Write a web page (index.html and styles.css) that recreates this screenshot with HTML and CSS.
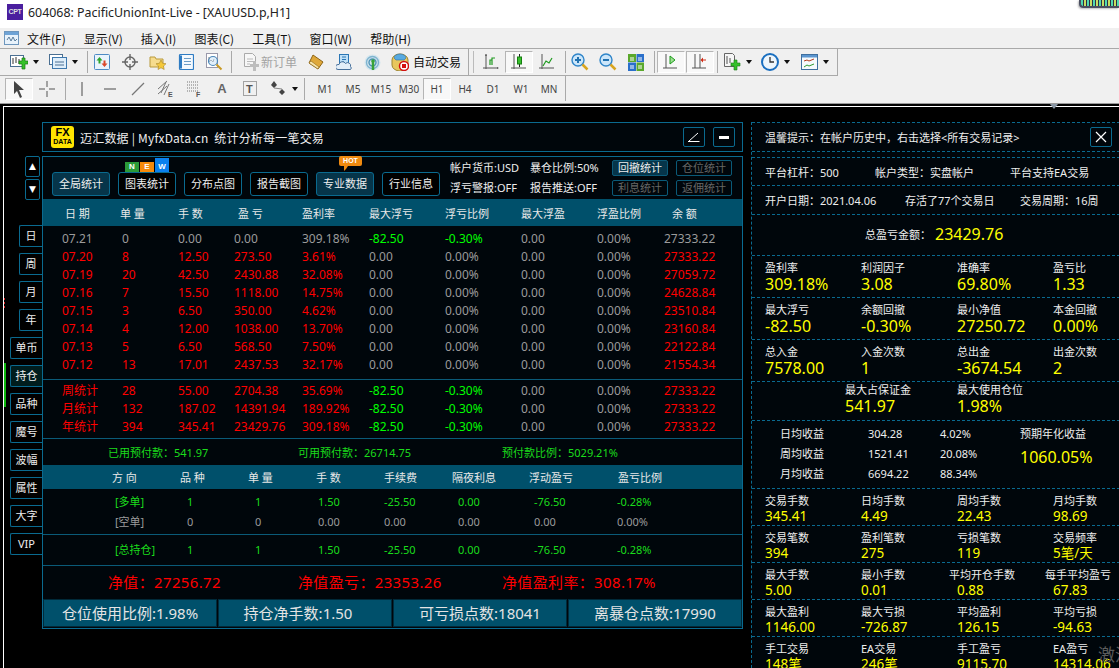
FILE: index.html
```html
<!DOCTYPE html>
<html lang="zh">
<head>
<meta charset="utf-8">
<title>604068: PacificUnionInt-Live - [XAUUSD.p,H1]</title>
<link rel="stylesheet" href="styles.css">
</head>
<body>
<div class="app">
  <header class="titlebar">
    <span class="appicon">CPT</span>
    <span class="apptitle">604068: PacificUnionInt-Live - [XAUUSD.p,H1]</span>
    <span class="peek"></span>
  </header>
  <nav class="menubar">
    <svg class="menuicon" width="15" height="14" viewBox="0 0 15 14"><rect x=".5" y=".5" width="14" height="13" fill="#e8f2fb" stroke="#6d96bd"/><rect x="1" y="1" width="13" height="3" fill="#6ea3d6"/><path d="M3 9l2-3 2 4 2-4 2 4 2-2" fill="none" stroke="#5a7d9c"/></svg>
    <span class="menu m1">文件(F)</span><span class="menu">显示(V)</span><span class="menu">插入(I)</span><span class="menu">图表(C)</span><span class="menu">工具(T)</span><span class="menu">窗口(W)</span><span class="menu">帮助(H)</span>
  </nav>

  <div class="tbrow row1">
    <div class="tbgroup g1">
      <span class="ti"><svg width="18" height="16" viewBox="0 0 18 16"><rect x=".5" y="1.5" width="13" height="11" fill="#fff" stroke="#4a6f92"/><path d="M3 4v6M6 3v6M9 5v5" stroke="#333"/><path d="M9 7h3v-3h3v3h3v3h-3v5h-3v-5H9z" fill="#35c02a" stroke="#1a7a14" stroke-width=".7"/></svg></span><span class="car"></span>
      <span class="ti gl3"><svg width="18" height="16" viewBox="0 0 18 16"><rect x=".5" y=".5" width="13" height="10" fill="#fff" stroke="#4a6f92"/><rect x="3.5" y="3.5" width="14" height="11" fill="#dfeefa" stroke="#3f78ad"/><path d="M6 8h9M6 11h9" stroke="#4a6f92"/></svg></span><span class="car"></span>
      <span class="sep sl7"></span>
      <span class="ti"><svg width="16" height="16" viewBox="0 0 16 16"><rect x=".5" y=".5" width="15" height="15" rx="1" fill="#e9f3fc" stroke="#4d8ac4"/><path d="M5.5 3l3 3.5h-2v3h-2v-3h-2z" fill="#2ca52c"/><path d="M10.5 13l-3-3.5h2v-3h2v3h2z" fill="#d9482b"/></svg></span>
      <span class="ti"><svg width="16" height="16" viewBox="0 0 16 16"><circle cx="8" cy="8" r="5" fill="none" stroke="#666" stroke-width="1.4"/><path d="M8 0v6M8 10v6M0 8h6M10 8h6" stroke="#666" stroke-width="1.4"/></svg></span>
      <span class="ti"><svg width="18" height="17" viewBox="0 0 18 17"><path d="M1 3h5l1 2h7v8H1z" fill="#f6dc8e" stroke="#b99a3c"/><path d="M12 6l1.6 3.3 3.4.4-2.5 2.4.7 3.4-3.2-1.7-3 1.7.6-3.4L7 9.7l3.4-.4z" fill="#f5c93b" stroke="#a4832a" stroke-width=".6"/></svg></span>
      <span class="ti"><svg width="16" height="16" viewBox="0 0 16 16"><rect x="1.5" y=".5" width="14" height="15" rx="1" fill="#f4f9fe" stroke="#2f7cc3" stroke-width="1.2"/><path d="M1 1.5h3v13H1z" fill="#2f7cc3"/><path d="M6 4.500h7M6 7.500h7M6 10.500h7" stroke="#6b9cc7"/></svg></span>
      <span class="ti"><svg width="18" height="18" viewBox="0 0 18 18"><rect x="1.500" y=".5" width="11" height="14" fill="#fff" stroke="#99a"/><path d="M4 4v5l2-2 2 2 1-3" fill="none" stroke="#777"/><circle cx="8" cy="8" r="4.500" fill="#cde4f7" fill-opacity=".6" stroke="#4a87b8" stroke-width="1.200"/><path d="M11.500 11.500l5 5" stroke="#c99a25" stroke-width="2"/></svg></span>
      <span class="sep sl3"></span>
      <span class="order"><svg width="16" height="18" viewBox="0 0 16 18"><path d="M1.500.5h8l3 3v10h-11z" fill="#f7f7f7" stroke="#aaa"/><path d="M4 6h6M4 8.500h6M4 11h3" stroke="#bbb"/><path d="M7 11h3V8h3v3h3v3h-3v4h-3v-4H7z" fill="#bdbdbd"/></svg><span class="ordertxt">新订单</span></span>
      <span class="ti"><svg width="16" height="16" viewBox="0 0 16 16"><path d="M5 1l10 7-5 7L1 9z" fill="#dfa83a" stroke="#8d6415"/><path d="M1 9l9 6 1-2-8-6z" fill="#f7e5ab" stroke="#8d6415" stroke-width=".6"/></svg></span>
      <span class="ti"><svg width="17" height="17" viewBox="0 0 17 17"><rect x="3.500" y=".5" width="9" height="11" fill="#bfe0f7" stroke="#2a76b5"/><path d="M6 3h4M6 5.500h4M6 8h2" stroke="#2a76b5"/><path d="M2 15.500a2.500 2.500 0 0 1 0-5h1a3.500 3.500 0 0 1 6.500-1 3 3 0 0 1 5 3 2 2 0 0 1 0 3z" fill="#e3eef8" stroke="#47709b"/></svg></span>
      <span class="ti"><svg width="17" height="17" viewBox="0 0 17 17"><circle cx="8.500" cy="8.500" r="8" fill="#d5e6ee"/><circle cx="8.500" cy="8.500" r="6" fill="none" stroke="#7fb4d0" stroke-width="1.400"/><circle cx="8.500" cy="8.500" r="3.500" fill="none" stroke="#4d93b8" stroke-width="1.400"/><path d="M9 7v9" stroke="#37a337" stroke-width="2.500"/><circle cx="9" cy="7" r="1.800" fill="#37a337"/></svg></span>
      <span class="auto"><svg width="18" height="18" viewBox="0 0 18 18"><path d="M1 7a8 6 0 0 1 16 0v5a8 6 0 0 1-16 0z" fill="#e8c65d" stroke="#9c8431"/><path d="M3 5a6 4 0 0 1 12 0l-2 2H5z" fill="#58aae0" stroke="#31709f" stroke-width=".6"/><circle cx="13" cy="13" r="4.500" fill="#fff" stroke="#d31010" stroke-width="1.500"/><rect x="11" y="11" width="4" height="4" fill="#d31010"/></svg><span class="autotxt">自动交易</span></span>
    </div>
    <div class="tbgroup g2">
      <span class="grip"></span>
      <span class="ti"><svg width="16" height="18" viewBox="0 0 16 18"><path d="M3 1v15M0 15h15" stroke="#555" fill="none"/><path d="M2 3l1-2 1 2M14 14l2 1-2 1" fill="#555"/><path d="M7 12V7h2M9 12V5h3" fill="none" stroke="#1f9a1f" stroke-width="1.200"/></svg></span>
      <span class="ti on"><svg width="16" height="18" viewBox="0 0 16 18"><path d="M3 1v15M0 15h15" stroke="#555" fill="none"/><path d="M8.500 1v13" stroke="#222"/><rect x="6.500" y="4" width="4" height="7" fill="#37c02c" stroke="#167d10"/></svg></span>
      <span class="ti"><svg width="16" height="18" viewBox="0 0 16 18"><path d="M3 1v15M0 15h15" stroke="#555" fill="none"/><path d="M4 12l3-5 3 2 3-5" transform="translate(0 1)" fill="none" stroke="#1f9a1f" stroke-width="1.200"/></svg></span>
      <span class="sep sl4"></span>
      <span class="ti"><svg width="18" height="18" viewBox="0 0 18 18"><circle cx="7" cy="7" r="6" fill="#cce6fa" stroke="#2f85c9" stroke-width="1.400"/><path d="M4 7h6M7 4v6" stroke="#2272b0" stroke-width="2"/><path d="M11.500 11.500l5 5" stroke="#d8a520" stroke-width="2.500"/></svg></span>
      <span class="ti"><svg width="18" height="18" viewBox="0 0 18 18"><circle cx="7" cy="7" r="6" fill="#cce6fa" stroke="#2f85c9" stroke-width="1.400"/><path d="M4 7h6" stroke="#2272b0" stroke-width="2"/><path d="M11.500 11.500l5 5" stroke="#d8a520" stroke-width="2.500"/></svg></span>
      <span class="ti"><svg width="16" height="17" viewBox="0 0 16 17"><rect width="8" height="8" fill="#5aa82c"/><rect x="8.500" width="7.500" height="8" fill="#2a6fca"/><rect y="8.500" width="8" height="8.500" fill="#2a6fca"/><rect x="8.500" y="8.500" width="7.500" height="8.500" fill="#5aa82c"/><path d="M2 4h4M10 4h4M2 12h4M10 12h4M2 6h4M10 6h4M2 14h4M10 14h4" stroke="#fff"/></svg></span>
      <span class="sep sl4"></span>
      <span class="ti on sl2"><svg width="16" height="16" viewBox="0 0 16 16"><path d="M3 0v14M0 14h14" stroke="#555" fill="none"/><path d="M7 5l5 4-5 4z" transform="translate(0 -3)" fill="#9fe092" stroke="#1a9a1a"/></svg></span>
      <span class="ti on sl1"><svg width="16" height="16" viewBox="0 0 16 16"><path d="M3 0v14M0 14h14M8 0v14" stroke="#555" fill="none"/><path d="M14 5.500H11V3.500L8.500 6l2.500 2.500v-2h3z" fill="#d02a14"/></svg></span>
      <span class="sep sl3"></span>
      <span class="ti"><svg width="17" height="18" viewBox="0 0 17 18"><path d="M.5.5h8l2 2v11H.5z" fill="#f6f6f6" stroke="#666"/><path d="M3 3v8M6 5v5" stroke="#555"/><path d="M7 10h3V7h3v3h3v3h-3v4h-3v-4H7z" fill="#35c02a" stroke="#1a7a14" stroke-width=".6"/></svg></span><span class="car"></span>
      <span class="ti sl2"><svg width="18" height="18" viewBox="0 0 18 18"><circle cx="9" cy="9" r="8" fill="#eef6fc" stroke="#1a6fc0" stroke-width="2"/><path d="M9 4v5h4" fill="none" stroke="#333" stroke-width="1.300"/></svg></span><span class="car"></span>
      <span class="ti sl3"><svg width="17" height="16" viewBox="0 0 17 16"><rect x=".5" y=".5" width="16" height="15" fill="#f6fafd" stroke="#3f6f9f"/><rect x="1" y="1" width="15" height="2.500" fill="#5b95cf"/><path d="M3 7l3-1 2 1 5-2" fill="none" stroke="#b33a1a"/><path d="M3 13l3-2 2 1 5-2" fill="none" stroke="#2f9a2f"/></svg></span><span class="car"></span>
    </div>
  </div>

  <div class="tbrow row2">
    <div class="tbgroup g3">
      <span class="ti on"><svg width="14" height="18" viewBox="0 0 14 18"><path d="M2 1l10 9H7l3 7-2 1-3-7-3 3z" fill="#444"/></svg></span>
      <span class="ti"><svg width="16" height="16" viewBox="0 0 16 16"><path d="M8 0v6M8 10v6M0 8h6M10 8h6" stroke="#555"/></svg></span>
      <span class="sep sl4"></span>
      <span class="ti sl2"><svg width="4" height="16" viewBox="0 0 4 16"><path d="M2 1v14" stroke="#666" stroke-width="1.200"/></svg></span>
      <span class="ti"><svg width="14" height="4" viewBox="0 0 14 4"><path d="M1 2h12" stroke="#666" stroke-width="1.200"/></svg></span>
      <span class="ti"><svg width="14" height="14" viewBox="0 0 14 14"><path d="M1 13L13 1" stroke="#777" stroke-width="1.200"/></svg></span>
      <span class="ti"><svg width="16" height="18" viewBox="0 0 16 18"><path d="M0 9L9 1M0 14l9-8M3 13l5-11M6 15l5-11" stroke="#777" fill="none"/><text x="10" y="17" class="svgt">E</text></svg></span>
      <span class="ti"><svg width="16" height="18" viewBox="0 0 16 18"><path d="M1 2h12M1 5h12M1 8h12M1 11h12" stroke="#777" stroke-dasharray="1 1"/><text x="10" y="17" class="svgt">F</text></svg></span>
      <span class="ti tool-a">A</span>
      <span class="ti"><svg width="14" height="15" viewBox="0 0 14 15"><rect x=".5" y=".5" width="13" height="14" fill="none" stroke="#555" stroke-dasharray="1 1"/><text x="3" y="12" class="svgb">T</text></svg></span>
      <span class="ti"><svg width="15" height="15" viewBox="0 0 15 15"><path d="M3 0l3 4-3 3-3-3zM11 8l3 3-3 3-3-3z" fill="#444"/><path d="M3 7l8 1" stroke="#888"/></svg></span><span class="car nar"></span>
      <span class="sep sl2"></span>
      <span class="tf sl6">M1</span><span class="tf">M5</span><span class="tf">M15</span><span class="tf">M30</span><span class="tf on">H1</span><span class="tf">H4</span><span class="tf">D1</span><span class="tf">W1</span><span class="tf">MN</span>
    </div>
  </div>

  <main class="chart">
    <span class="marker"></span>
    <span class="greenbar"></span>
    <span class="redtick"></span>

    <div class="arrows">
      <button class="arrowbtn">▲</button>
      <button class="arrowbtn">▼</button>
    </div>

    <div class="tabs">
      <span class="tab short">日</span>
      <span class="tab short">周</span>
      <span class="tab short">月</span>
      <span class="tab short">年</span>
      <span class="tab">单币</span>
      <span class="tab act">持仓</span>
      <span class="tab">品种</span>
      <span class="tab">魔号</span>
      <span class="tab">波幅</span>
      <span class="tab">属性</span>
      <span class="tab">大字</span>
      <span class="tab">VIP</span>
    </div>

    <section class="main">
      <div class="mtitle">
        <div class="logo"><span class="lfx">FX</span><span class="lda">DATA</span></div>
        <span class="mtext">迈汇数据 | MyfxData.cn&nbsp;&nbsp;统计分析每一笔交易</span>
        <span class="wbtn"><svg width="12" height="10" viewBox="0 0 12 10"><path d="M0 9.500h11.500M1 9L10 1" stroke="#fff" fill="none"/></svg></span>
        <span class="wbtn"><span class="dash"></span></span>
      </div>

      <div class="mbody">
        <div class="mtools">
          <div class="tabsbar">
            <span class="tbtn sel">全局统计</span>
            <span class="tbtn">图表统计<span class="new"><i class="nn">N</i><i class="ne">E</i><i class="nw">W</i></span></span>
            <span class="tbtn">分布点图</span>
            <span class="tbtn">报告截图</span>
            <span class="tbtn sel">专业数据<span class="hot">HOT</span></span>
            <span class="tbtn">行业信息</span>
          </div>
          <div class="infogrid">
            <span>帐户货币:USD</span><span>暴仓比例:50%</span>
            <span>浮亏警报:OFF</span><span>报告推送:OFF</span>
          </div>
          <div class="smallgrid">
            <span class="sbtn on">回撤统计</span><span class="sbtn">仓位统计</span>
            <span class="sbtn">利息统计</span><span class="sbtn">返佣统计</span>
          </div>
        </div>

        <div class="thead">
          <span>日 期</span><span>单 量</span><span>手 数</span><span>盈 亏</span><span>盈利率</span><span>最大浮亏</span><span>浮亏比例</span><span>最大浮盈</span><span>浮盈比例</span><span>余 额</span>
        </div>

        <div class="tbody">
          <div class="trow gray"><span>07.21</span><span>0</span><span>0.00</span><span>0.00</span><span>309.18%</span><span class="gr">-82.50</span><span class="gr">-0.30%</span><span>0.00</span><span>0.00%</span><span>27333.22</span></div>
          <div class="trow red"><span>07.20</span><span>8</span><span>12.50</span><span>273.50</span><span>3.61%</span><span class="ga">0.00</span><span class="ga">0.00%</span><span class="ga">0.00</span><span class="ga">0.00%</span><span>27333.22</span></div>
          <div class="trow red"><span>07.19</span><span>20</span><span>42.50</span><span>2430.88</span><span>32.08%</span><span class="ga">0.00</span><span class="ga">0.00%</span><span class="ga">0.00</span><span class="ga">0.00%</span><span>27059.72</span></div>
          <div class="trow red"><span>07.16</span><span>7</span><span>15.50</span><span>1118.00</span><span>14.75%</span><span class="ga">0.00</span><span class="ga">0.00%</span><span class="ga">0.00</span><span class="ga">0.00%</span><span>24628.84</span></div>
          <div class="trow red"><span>07.15</span><span>3</span><span>6.50</span><span>350.00</span><span>4.62%</span><span class="ga">0.00</span><span class="ga">0.00%</span><span class="ga">0.00</span><span class="ga">0.00%</span><span>23510.84</span></div>
          <div class="trow red"><span>07.14</span><span>4</span><span>12.00</span><span>1038.00</span><span>13.70%</span><span class="ga">0.00</span><span class="ga">0.00%</span><span class="ga">0.00</span><span class="ga">0.00%</span><span>23160.84</span></div>
          <div class="trow red"><span>07.13</span><span>5</span><span>6.50</span><span>568.50</span><span>7.50%</span><span class="ga">0.00</span><span class="ga">0.00%</span><span class="ga">0.00</span><span class="ga">0.00%</span><span>22122.84</span></div>
          <div class="trow red"><span>07.12</span><span>13</span><span>17.01</span><span>2437.53</span><span>32.17%</span><span class="ga">0.00</span><span class="ga">0.00%</span><span class="ga">0.00</span><span class="ga">0.00%</span><span>21554.34</span></div>
        </div>

        <div class="tsum">
          <div class="trow red"><span>周统计</span><span>28</span><span>55.00</span><span>2704.38</span><span>35.69%</span><span class="gr">-82.50</span><span class="gr">-0.30%</span><span class="ga">0.00</span><span class="ga">0.00%</span><span>27333.22</span></div>
          <div class="trow red"><span>月统计</span><span>132</span><span>187.02</span><span>14391.94</span><span>189.92%</span><span class="gr">-82.50</span><span class="gr">-0.30%</span><span class="ga">0.00</span><span class="ga">0.00%</span><span>27333.22</span></div>
          <div class="trow red"><span>年统计</span><span>394</span><span>345.41</span><span>23429.76</span><span>309.18%</span><span class="gr">-82.50</span><span class="gr">-0.30%</span><span class="ga">0.00</span><span class="ga">0.00%</span><span>27333.22</span></div>
        </div>

        <div class="margin">
          <span>已用预付款：541.97</span><span>可用预付款：26714.75</span><span>预付款比例：5029.21%</span>
        </div>

        <div class="phead">
          <span>方 向</span><span>品 种</span><span>单 量</span><span>手 数</span><span>手续费</span><span>隔夜利息</span><span>浮动盈亏</span><span>盈亏比例</span>
        </div>
        <div class="pbody">
          <div class="prow grn"><span>[多单]</span><span>1</span><span>1</span><span>1.50</span><span>-25.50</span><span>0.00</span><span>-76.50</span><span>-0.28%</span></div>
          <div class="prow gry"><span>[空单]</span><span>0</span><span>0</span><span>0.00</span><span>0.00</span><span>0.00</span><span>0.00</span><span>0.00%</span></div>
        </div>
        <div class="ptotal">
          <div class="prow grn"><span>[总持仓]</span><span>1</span><span>1</span><span>1.50</span><span>-25.50</span><span>0.00</span><span>-76.50</span><span>-0.28%</span></div>
        </div>
        <div class="equity">
          <span>净值：27256.72</span><span>净值盈亏：23353.26</span><span>净值盈利率：308.17%</span>
        </div>
        <div class="bottom">
          <span>仓位使用比例:1.98%</span><span class="lean">持仓净手数:1.50</span><span>可亏损点数:18041</span><span>离暴仓点数:17990</span>
        </div>
      </div>
    </section>

    <aside class="side">
      <div class="srow tip h29"><span>温馨提示：在帐户历史中，右击选择&lt;所有交易记录&gt;</span><span class="wbtn close"><svg width="12" height="12" viewBox="0 0 12 12"><path d="M1 1l10 10M11 1L1 11" stroke="#fff" stroke-width="1.200"/></svg></span></div>
      <div class="srow h6"></div>
      <div class="srow line h28"><span class="c1">平台杠杆：500</span><span class="c2">帐户类型：实盘帐户</span><span class="c3">平台支持EA交易</span></div>
      <div class="srow line h29"><span class="c1">开户日期：2021.04.06</span><span class="c4">存活了77个交易日</span><span class="c5">交易周期：16周</span></div>
      <div class="srow total h41"><span class="tl">总盈亏金额：</span><span class="tv">23429.76</span></div>

      <div class="srow stats big h42">
        <div><b>盈利率</b><em>309.18%</em></div><div><b>利润因子</b><em>3.08</em></div><div><b>准确率</b><em>69.80%</em></div><div><b>盈亏比</b><em>1.33</em></div>
      </div>
      <div class="srow stats big h42">
        <div><b>最大浮亏</b><em>-82.50</em></div><div><b>余额回撤</b><em>-0.30%</em></div><div><b>最小净值</b><em>27250.72</em></div><div><b>本金回撤</b><em>0.00%</em></div>
      </div>
      <div class="srow stats big h42">
        <div><b>总入金</b><em>7578.00</em></div><div><b>入金次数</b><em>1</em></div><div><b>总出金</b><em>-3674.54</em></div><div><b>出金次数</b><em>2</em></div>
      </div>
      <div class="srow stats big two h39">
        <div><b>最大占保证金</b><em>541.97</em></div><div><b>最大使用仓位</b><em>1.98%</em></div>
      </div>
      <div class="srow avg h68">
        <div class="avgtable">
          <span>日均收益</span><span>304.28</span><span>4.02%</span>
          <span>周均收益</span><span>1521.41</span><span>20.08%</span>
          <span>月均收益</span><span>6694.22</span><span>88.34%</span>
        </div>
        <div class="annual"><b>预期年化收益</b><em>1060.05%</em></div>
      </div>
      <div class="srow stats small h37">
        <div><b>交易手数</b><em>345.41</em></div><div><b>日均手数</b><em>4.49</em></div><div><b>周均手数</b><em>22.43</em></div><div><b>月均手数</b><em>98.69</em></div>
      </div>
      <div class="srow stats small h37">
        <div><b>交易笔数</b><em>394</em></div><div><b>盈利笔数</b><em>275</em></div><div><b>亏损笔数</b><em>119</em></div><div><b>交易频率</b><em>5笔/天</em></div>
      </div>
      <div class="srow stats small h37">
        <div><b>最大手数</b><em>5.00</em></div><div><b>最小手数</b><em>0.01</em></div><div><b class="out">平均开仓手数</b><em>0.88</em></div><div><b class="out">每手平均盈亏</b><em>67.83</em></div>
      </div>
      <div class="srow stats small h37">
        <div><b>最大盈利</b><em>1146.00</em></div><div><b>最大亏损</b><em>-726.87</em></div><div><b>平均盈利</b><em>126.15</em></div><div><b>平均亏损</b><em>-94.63</em></div>
      </div>
      <div class="srow stats small h37">
        <div><b>手工交易</b><em>148笔</em></div><div><b>EA交易</b><em>246笔</em></div><div><b>手工盈亏</b><em>9115.70</em></div><div><b>EA盈亏</b><em>14314.06</em></div>
      </div>
    </aside>
    <span class="watermark">激活</span>
  </main>
</div>
</body>
</html>
```
FILE: styles.css
```css
* { box-sizing: border-box; }
html, body { margin: 0; padding: 0; }
body { width: 1119px; height: 668px; overflow: hidden; font-family: "Noto Sans", "Noto Sans CJK SC", sans-serif; background: #000; }
.app { display: flex; flex-direction: column; height: 668px; }

/* window chrome */
.titlebar { height: 28px; background: #fff; display: flex; align-items: center; padding-left: 7px; position: relative; flex: none; }
.appicon { width: 16px; height: 16px; background: #4a1e9e; color: #ddd; font: 700 7px/16px "Liberation Sans", sans-serif; text-align: center; letter-spacing: -.3px; margin-top: -4px; }
.apptitle { margin-left: 5px; font-size: 12.4px; color: #222; margin-top: -4px; }
.peek { position: absolute; right: 0; top: 0; width: 40px; height: 8px; background: repeating-linear-gradient(90deg, #4fd8b0 0 2px, #2c3040 2px 3px, #c8dc60 3px 5px, #2c3040 5px 6px); border: 2px solid #4a4e60; border-top: 0; border-right: 0; border-bottom-left-radius: 4px; box-shadow: -1px 1px 2px #bbb; }

.menubar { height: 20px; background: #f0f0f0; display: flex; align-items: center; padding-left: 4px; font-size: 12px; color: #111; flex: none; }
.menuicon { flex: none; }
.menu { margin-right: 18px; font-family: "Noto Sans CJK SC", sans-serif; white-space: nowrap; }
.menu.m1 { margin-left: 8px; }

.tbrow { background: #f0f0f0; display: flex; flex: none; }
.row1 { height: 28px; border-top: 1px solid #a9a9a9; }
.row2 { height: 28px; border-bottom: 1px solid #9a9a9a; padding-bottom: 2px; }
.tbgroup { display: flex; align-items: center; height: 100%; }
.g1 { width: 469px; padding-left: 5px; border-right: 1px solid #a9a9a9; border-bottom: 1px solid #a9a9a9; }
.g2 { width: 369px; border-right: 1px solid #a9a9a9; border-bottom: 1px solid #a9a9a9; padding-left: 3px; }
.g3 { width: 566px; padding-left: 5px; border-right: 1px solid #a9a9a9; }
.ti { width: 28px; height: 22px; display: flex; align-items: center; justify-content: center; flex: none; }
.ti.on, .tf.on { background: #f8f8f8; border: 1px solid #b5b5b5; border-right-color: #fff; border-bottom-color: #fff; }
.car { flex: none; width: 8px; height: 8px; position: relative; }
.car::after { content: ""; position: absolute; left: 0; top: 2px; border: 3.5px solid transparent; border-top: 4px solid #111; }
.car.nar { width: 10px; }
.sep { flex: none; width: 1px; height: 22px; background: #a9a9a9; }
.grip { flex: none; width: 1px; height: 22px; background: #bbb; margin: 0 3px 0 1px; }
.sl1 { margin-left: 1px; } .sl2 { margin-left: 2px; } .sl3 { margin-left: 3px; } .sl4 { margin-left: 4px; } .sl6 { margin-left: 6px; } .sl7 { margin-left: 7px; }
.gl3 { margin-left: 3px; }
.order { flex: none; width: 62px; margin-left: 8px; display: flex; align-items: center; gap: 2px; padding-left: 3px; }
.ordertxt { color: #a3a3a3; font-size: 12px; white-space: nowrap; }
.auto { flex: none; margin-left: 2px; display: flex; align-items: center; gap: 4px; padding-left: 3px; }
.autotxt { color: #111; font-size: 12px; white-space: nowrap; }
.svgt { font: 700 7px "Liberation Sans", sans-serif; fill: #555; }
.svgb { font: 700 11px "Liberation Sans", sans-serif; fill: #555; }
.tool-a { font: 700 13px "Liberation Sans", sans-serif; color: #666; }
.tf { width: 28px; height: 22px; display: flex; align-items: center; justify-content: center; font: 10px "Noto Sans", sans-serif; color: #444; flex: none; }

/* chart canvas */
.chart { position: relative; flex: 1; background: #000; overflow: hidden; border-left: 1px solid transparent; }
.chart::before { content: ""; position: absolute; left: 2px; top: 2px; right: 0; bottom: 0; border-left: 1px solid #fff; border-top: 1px solid #fff; }
.marker { position: absolute; left: 1049px; top: 0; border: 4px solid transparent; border-top: 5px solid #8a97a5; z-index: 1; }
.greenbar { position: absolute; left: 3px; top: 259px; width: 2px; height: 44px; background: #0dbb0d; }
.redtick { position: absolute; left: 3px; top: 194px; width: 1px; height: 12px; background: repeating-linear-gradient(#d22 0 2px, #000 2px 4px); }

.arrows { position: absolute; left: 24px; top: 52px; display: flex; flex-direction: column; gap: 2px; }
.arrowbtn { width: 15px; height: 21px; padding: 0; background: #000; border: 1px solid #0a6a8f; border-radius: 2px; color: #fff; font: 9px/19px "DejaVu Sans", sans-serif; }
.tabs { position: absolute; left: 9px; top: 121px; width: 32px; display: flex; flex-direction: column; gap: 6px; align-items: flex-end; }
.tab { width: 32px; height: 22px; border: 1px solid #0a6a8f; border-right: 0; border-radius: 2px 0 0 2px; color: #eee; font-size: 11px; line-height: 20px; text-align: center; background: #000; }
.tab.short { width: 23px; }
.tab.act { background: #001d1d; }

/* main window */
.main { position: absolute; left: 41px; top: 18px; width: 701px; display: flex; flex-direction: column; gap: 4px; color: #eee; }
.mtitle { height: 30px; border: 1px solid #0a6a8f; background: #00060b; display: flex; align-items: center; padding: 0 7px 0 8px; }
.logo { width: 23px; height: 22px; background: #ffe400; border-radius: 3px; display: flex; flex-direction: column; align-items: center; color: #000; font-family: "Liberation Sans", sans-serif; font-weight: 700; line-height: 1; flex: none; }
.lfx { font-size: 11px; margin-top: 1px; }
.lda { font-size: 7px; margin-top: 0; }
.mtext { font-size: 12px; margin-left: 6px; flex: 1; white-space: nowrap; font-family: "Noto Sans CJK SC", sans-serif; letter-spacing: .2px; }
.wbtn { width: 22px; height: 20px; border: 1px solid #0a6a8f; border-radius: 2px; display: flex; align-items: center; justify-content: center; margin-left: 8px; flex: none; }
.dash { width: 10px; height: 3px; background: #fff; }

.mbody { border: 1px solid #0a6a8f; background: #00060b; display: flex; flex-direction: column; height: 473px; }
.mtools { height: 42px; display: flex; align-items: flex-start; flex: none; }
.tabsbar { display: flex; gap: 8px; margin: 15px 0 0 9px; }
.tbtn { position: relative; width: 58px; height: 24px; border: 1px solid #0a6a8f; border-radius: 3px; font-size: 11px; line-height: 22px; text-align: center; background: #000; }
.tbtn.sel { background: #06354a; }
.new { position: absolute; left: 6px; top: -15px; display: flex; align-items: flex-end; gap: 1px; }
.new i { width: 14px; font: 700 8px/10px "Liberation Sans", sans-serif; color: #fff; text-align: center; }
.nn { background: #2a9a38; height: 10px; }
.ne { background: #f58a0a; height: 10px; }
.nw { background: #0a80ee; height: 14px; line-height: 18px !important; }
.hot { position: absolute; left: 22px; top: -17px; width: 23px; height: 10px; background: #f08a10; border-radius: 2px; color: #fff; font: 700 7px/10px "Liberation Sans", sans-serif; text-align: center; }
.hot::after { content: ""; position: absolute; left: 5px; top: 10px; border: 2px solid transparent; border-top: 3px solid #f08a10; border-left: 2px solid #f08a10; }
.infogrid { display: grid; grid-template-columns: 80px 82px; grid-auto-rows: 20px; margin: 1px 0 0 10px; font-size: 11px; line-height: 20px; white-space: nowrap; }
.smallgrid { display: grid; grid-template-columns: 56px 56px; gap: 4px 8px; grid-auto-rows: 16px; margin-top: 3px; }
.sbtn { border: 1px solid #0a5a78; border-radius: 2px; color: #666; font-size: 11px; line-height: 14px; text-align: center; }
.sbtn.on { color: #eee; background: #06354a; }

.thead, .phead { background: #00506b; color: #e8e8e8; font-size: 11px; display: grid; align-items: center; flex: none; white-space: nowrap; }
.thead { height: 27px; grid-template-columns: 55px 58px 60px 64px 67px 76px 76px 76px 75px 70px; padding-left: 22px; }
.tbody { padding: 4px 0 5px; border-bottom: 1px solid #0a5a78; flex: none; }
.tsum { padding: 2px 0; height: 59px; border-bottom: 1px solid #0a5a78; flex: none; }
.trow { display: grid; grid-template-columns: 60px 56px 56px 68px 67px 76px 76px 76px 67px 70px; height: 18px; padding-left: 19px; font-size: 12px; line-height: 18px; white-space: nowrap; }
.trow.gray { color: #9b9b9b; }
.trow.red { color: #f00; }
.gr { color: #0f0; }
.ga { color: #9b9b9b; }
.margin, .equity { display: grid; grid-template-columns: 190px 204px 1fr; padding-left: 65px; align-items: center; flex: none; white-space: nowrap; }
.margin { height: 26px; color: #1bdc1b; font-size: 11px; }
.phead { height: 24px; grid-template-columns: 68px 68px 68px 68px 68px 77px 89px 1fr; padding-left: 69px; }
.pbody { padding: 3px 0 3px; height: 46px; border-bottom: 1px solid #0a5a78; flex: none; }
.ptotal { height: 31px; display: flex; align-items: center; border-bottom: 1px solid #0a5a78; flex: none; }
.prow { display: grid; width: 100%; grid-template-columns: 72px 68px 63px 66px 74px 76px 83px 1fr; height: 20px; line-height: 20px; padding-left: 72px; font-size: 11px; white-space: nowrap; }
.grn { color: #1bdc1b; }
.gry { color: #9b9b9b; }
.equity { height: 33px; color: #f00; font-size: 15px; padding-bottom: 3px; letter-spacing: .35px; }
.bottom { display: grid; grid-template-columns: repeat(4, 1fr); gap: 1px; height: 28px; flex: none; }
.bottom span { background: #00506b; border: 1px solid #002a3a; color: #e4e4e4; font-size: 15px; line-height: 26px; text-align: center; white-space: nowrap; }
.bottom .lean { padding-right: 14px; }

/* side panel */
.side { position: absolute; left: 750px; top: 18px; width: 369px; height: 546px; overflow: hidden; background: #00060b; border-left: 1px dashed #0a6a8f; color: #eee; font-size: 11px; }
.srow { border-top: 1px dashed #0a6a8f; position: relative; }
.h6 { height: 6px; } .h28 { height: 28px; } .h29 { height: 29px; } .h37 { height: 37px; } .h39 { height: 39px; } .h41 { height: 41px; } .h42 { height: 42px; } .h68 { height: 68px; }
.tip { display: flex; align-items: center; justify-content: space-between; padding: 0 8px 0 13px; white-space: nowrap; }
.close { margin: 0; }
.line { display: flex; align-items: center; padding-left: 13px; white-space: nowrap; }
.c1 { width: 110px; flex: none; }
.c2 { width: 135px; }
.c1 + .c4 { margin-left: 30px; width: 115px; }
.total { display: flex; align-items: center; padding: 0 0 3px 113px; }
.tl { font-size: 11px; }
.tv { color: #ff0; font-size: 16px; margin-left: 4px; }
.stats { display: grid; grid-template-columns: repeat(4, 96px); padding-left: 13px; align-content: center; }
.stats div { display: flex; flex-direction: column; white-space: nowrap; }
.stats b { font-weight: 400; font-size: 11px; line-height: 15px; }
.stats em { font-style: normal; color: #ff0; font-size: 13.5px; line-height: 17px; }
.stats.small { padding-top: 4px; }
.stats.small b { line-height: 14px; }
.stats.big em { font-size: 16px; line-height: 19px; }
.stats b.out { margin-left: -8px; }
.stats.two { padding: 0 0 4px 93px; grid-template-columns: 112px 112px; }
.avg { display: flex; padding-left: 28px; }
.avgtable { display: grid; grid-template-columns: 88px 72px 80px; grid-auto-rows: 20px; line-height: 20px; padding-top: 3px; font-size: 11px; flex: none; white-space: nowrap; }
.annual { display: flex; flex-direction: column; padding-top: 3px; white-space: nowrap; }
.annual b { font-weight: 400; line-height: 20px; }
.annual em { font-style: normal; color: #ff0; font-size: 16px; line-height: 26px; }
.watermark { position: absolute; left: 1097px; top: 541px; font-size: 17px; line-height: 20px; color: #5c5c5c; white-space: nowrap; }
```
